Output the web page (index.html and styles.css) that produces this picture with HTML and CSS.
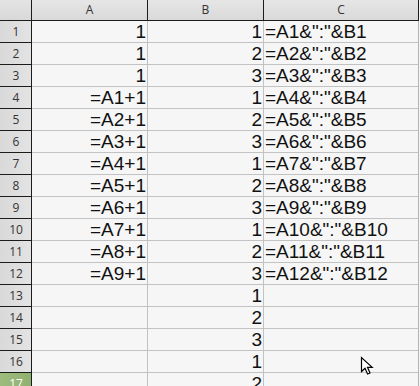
FILE: index.html
```html
<!DOCTYPE html>
<html lang="en">
<head>
  <meta charset="UTF-8" />
  <title>Sheet</title>
  <link rel="stylesheet" href="styles.css">
</head>
<body>
  <div class="sheet">
    <div class="corner"></div>
    <div class="col-head">A</div>
    <div class="col-head">B</div>
    <div class="col-head">C</div>

    <div class="row-head">1</div><div class="cell num">1</div><div class="cell num">1</div><div class="cell txt">=A1&amp;":"&amp;B1</div>
    <div class="row-head">2</div><div class="cell num">1</div><div class="cell num">2</div><div class="cell txt">=A2&amp;":"&amp;B2</div>
    <div class="row-head">3</div><div class="cell num">1</div><div class="cell num">3</div><div class="cell txt">=A3&amp;":"&amp;B3</div>
    <div class="row-head">4</div><div class="cell num">=A1+1</div><div class="cell num">1</div><div class="cell txt">=A4&amp;":"&amp;B4</div>
    <div class="row-head">5</div><div class="cell num">=A2+1</div><div class="cell num">2</div><div class="cell txt">=A5&amp;":"&amp;B5</div>
    <div class="row-head">6</div><div class="cell num">=A3+1</div><div class="cell num">3</div><div class="cell txt">=A6&amp;":"&amp;B6</div>
    <div class="row-head">7</div><div class="cell num">=A4+1</div><div class="cell num">1</div><div class="cell txt">=A7&amp;":"&amp;B7</div>
    <div class="row-head">8</div><div class="cell num">=A5+1</div><div class="cell num">2</div><div class="cell txt">=A8&amp;":"&amp;B8</div>
    <div class="row-head">9</div><div class="cell num">=A6+1</div><div class="cell num">3</div><div class="cell txt">=A9&amp;":"&amp;B9</div>
    <div class="row-head">10</div><div class="cell num">=A7+1</div><div class="cell num">1</div><div class="cell txt">=A10&amp;":"&amp;B10</div>
    <div class="row-head">11</div><div class="cell num">=A8+1</div><div class="cell num">2</div><div class="cell txt">=A11&amp;":"&amp;B11</div>
    <div class="row-head">12</div><div class="cell num">=A9+1</div><div class="cell num">3</div><div class="cell txt">=A12&amp;":"&amp;B12</div>
    <div class="row-head">13</div><div class="cell num"></div><div class="cell num">1</div><div class="cell txt"></div>
    <div class="row-head">14</div><div class="cell num"></div><div class="cell num">2</div><div class="cell txt"></div>
    <div class="row-head">15</div><div class="cell num"></div><div class="cell num">3</div><div class="cell txt"></div>
    <div class="row-head">16</div><div class="cell num"></div><div class="cell num">1</div><div class="cell txt"></div>
    <div class="row-head active">17</div><div class="cell num"></div><div class="cell num">2</div><div class="cell txt"></div>
  </div>

  <svg class="pointer" width="14" height="20" viewBox="0 0 14 20">
    <path d="M1.5 1.5 L1.5 15.5 L5 12.2 L7.6 18 L10 17 L7.5 11.3 L12.2 11.3 Z" fill="#fff" stroke="#000" stroke-width="1.2" stroke-linejoin="miter"/>
  </svg>
</body>
</html>
```

FILE: styles.css
```css
* {
  margin: 0;
  padding: 0;
  box-sizing: border-box;
}

body {
  background-color: #f6f6f6;
  overflow: hidden;
}

.sheet {
  display: grid;
  grid-template-columns: 32px 116px 116px 155px;
  grid-template-rows: 21px;
  grid-auto-rows: 22px;
  background-color: #f6f6f6;
}

.corner,
.col-head,
.row-head {
  font-family: 'Open Sans', sans-serif;
  font-size: 12px;
  color: #333;
  border-right: 1px solid #1c1c1c;
  border-bottom: 1px solid #1c1c1c;
}

.corner {
  background: linear-gradient(to bottom, #e4e4e4, #d8d8d8);
}

.col-head {
  background: linear-gradient(to bottom, #e6e6e6, #d9d9d9);
  text-align: center;
  line-height: 20px;
}

.row-head {
  background: linear-gradient(to right, #d9d9d9, #e3e3e3);
  text-align: center;
  line-height: 22px;
  padding-left: 1px;
}

.row-head.active {
  background: linear-gradient(to right, #9dbc7e, #8fb16f);
  color: #fff;
}

.cell {
  font-family: 'Liberation Sans', Arial, sans-serif;
  font-size: 19px;
  line-height: 21px;
  color: #111;
  border-right: 1px solid #c2c2c2;
  border-bottom: 1px solid #c2c2c2;
  white-space: nowrap;
  overflow: hidden;
}

.num {
  text-align: right;
  padding-right: 1px;
}

.txt {
  padding-left: 1px;
  border-right-color: #b4b4b4;
}

.pointer {
  position: absolute;
  left: 360px;
  top: 356px;
}
```
